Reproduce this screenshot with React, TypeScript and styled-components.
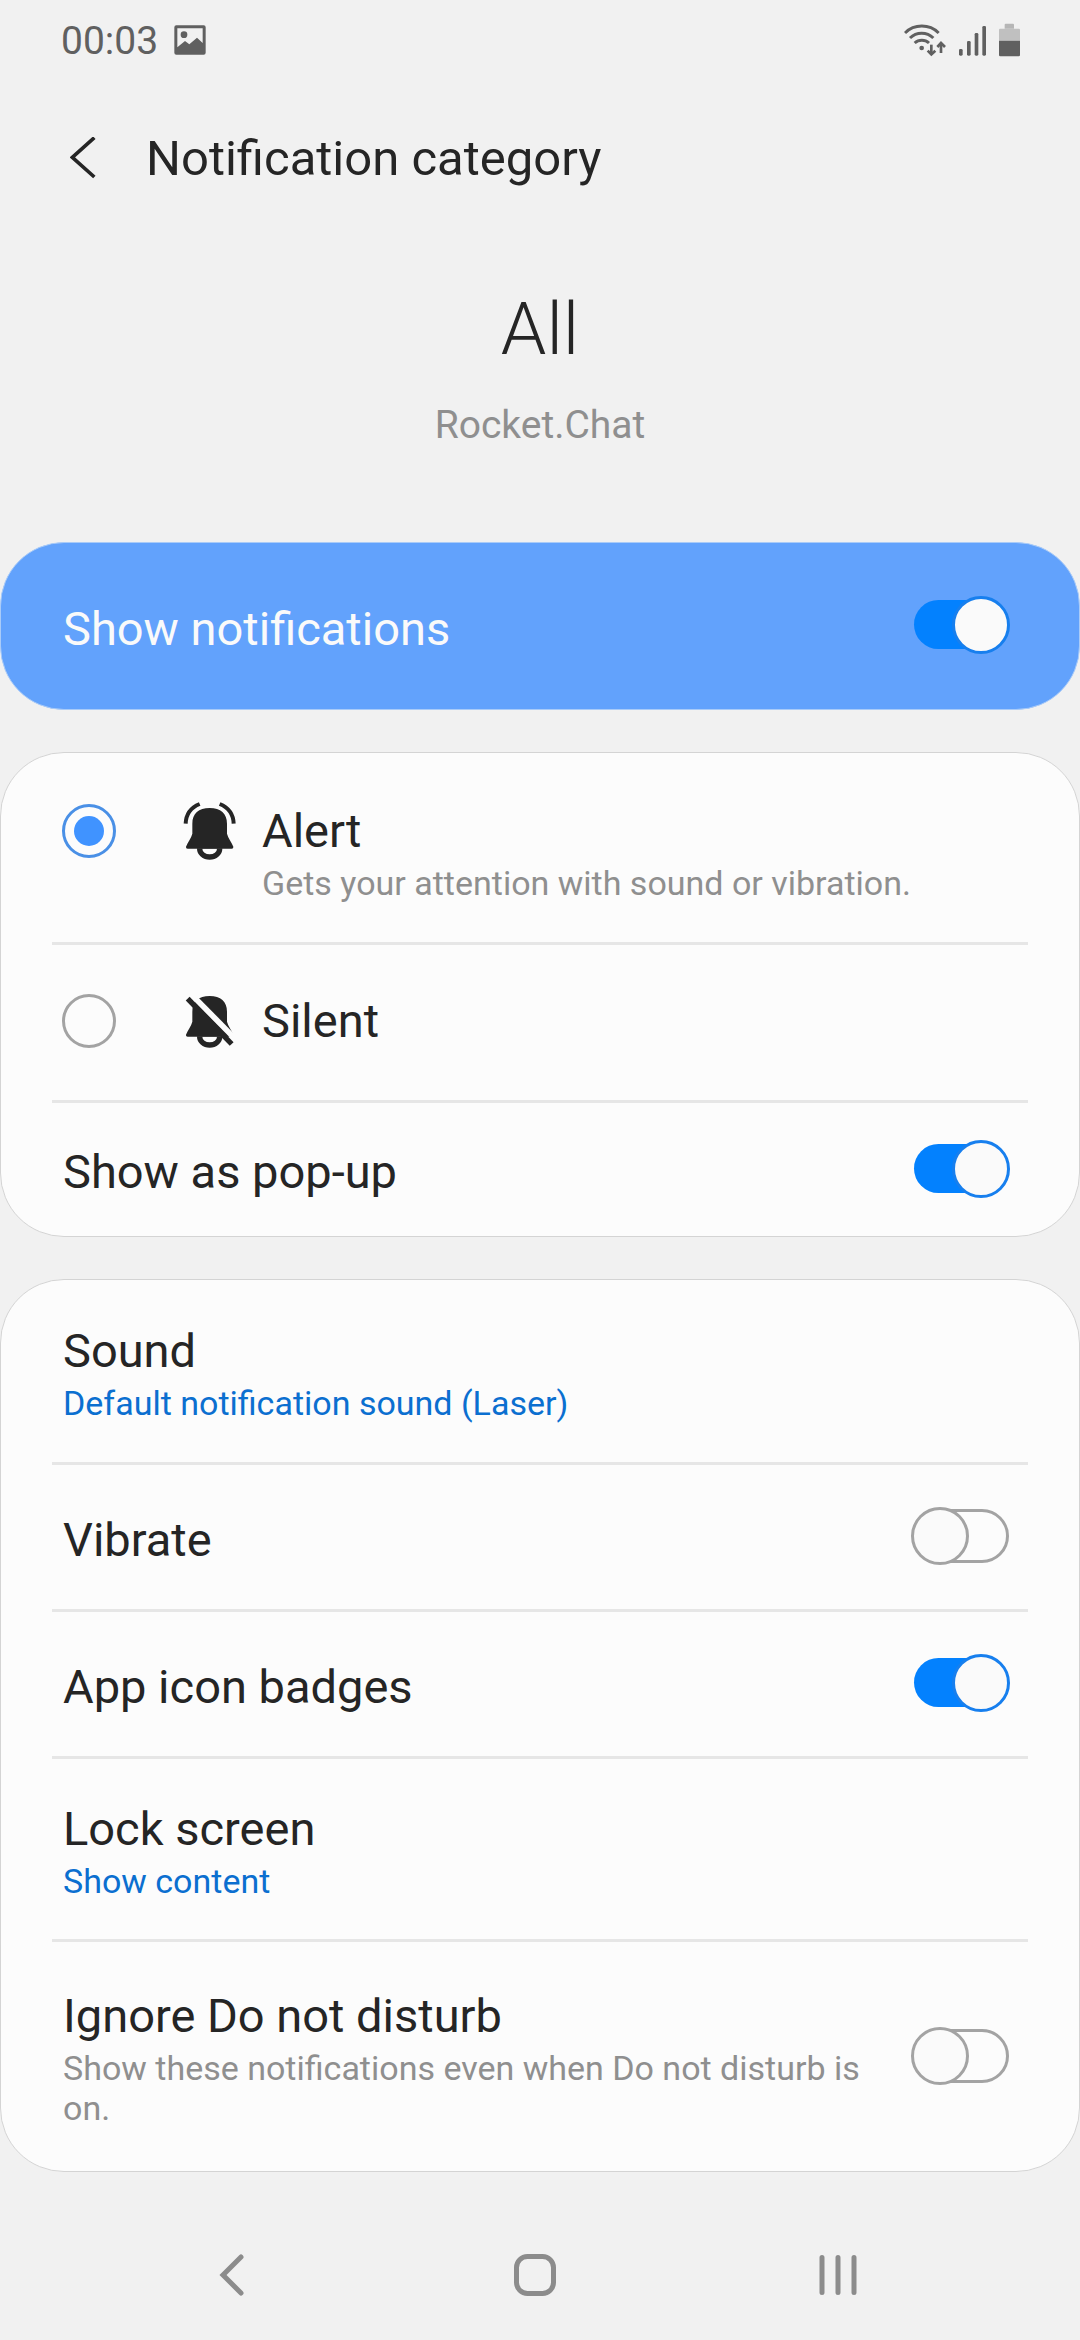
import React, { useState } from "react";
import styled, { createGlobalStyle } from "styled-components";

const ink = "#252525";
const muted = "#8f8f8f";
const blue = "#0381fe";
const link = "#0b6fd0";

const GlobalStyle = createGlobalStyle`
  *, *::before, *::after { box-sizing: border-box; }
  body {
    margin: 0;
    background: #f1f1f1;
    color: ${ink};
    font-family: Roboto, "Noto Sans", sans-serif;
  }
  button { border: 0; padding: 0; background: none; font: inherit; color: inherit; cursor: pointer; }
`;

const Screen = styled.div`
  display: flex;
  flex-direction: column;
  min-height: 100vh;
`;

const StatusBar = styled.div`
  display: flex;
  align-items: center;
  justify-content: space-between;
  height: 80px;
  padding: 0 60px 0 61px;
  color: #606060;
`;

const StatusGroup = styled.div<{ $gap: number }>`
  display: flex;
  align-items: center;
  gap: ${(p) => p.$gap}px;
`;

const Clock = styled.span`
  font-size: 39px;
  line-height: 46px;
  padding-top: 2px;
`;

const Header = styled.header`
  display: flex;
  align-items: center;
  height: 158px;
  padding: 0 60px;
`;

const BackButton = styled.button`
  display: flex;
  align-items: center;
  width: 86px;
  height: 86px;
  padding-left: 10px;
`;

const HeaderTitle = styled.h1`
  margin: 0;
  font-size: 49px;
  font-weight: 400;
  line-height: 64px;
`;

const Hero = styled.section`
  display: flex;
  flex-direction: column;
  align-items: center;
  gap: 30px;
  padding: 48px 60px 94px;
`;

const ChannelName = styled.h2`
  margin: 0;
  font-size: 73px;
  font-weight: 300;
  line-height: 86px;
`;

const AppName = styled.p`
  margin: 0;
  color: ${muted};
  font-size: 39px;
  line-height: 46px;
`;

const Groups = styled.main`
  display: flex;
  flex: 1;
  flex-direction: column;
  gap: 42px;
`;

const Card = styled.section<{ $accent?: boolean }>`
  overflow: hidden;
  border: 1px solid ${(p) => (p.$accent ? "#a9cbf8" : "#d4d4d4")};
  border-radius: 64px;
  background: ${(p) => (p.$accent ? "#62a2fc" : "#fcfcfc")};
  color: ${(p) => (p.$accent ? "#fafafa" : ink)};
`;

const Divider = styled.hr`
  height: 3px;
  margin: 0 51px;
  border: 0;
  background: #e6e6e6;
`;

const Row = styled.div<{ $height: number }>`
  display: flex;
  align-items: center;
  justify-content: space-between;
  min-height: ${(p) => p.$height}px;
  padding: 0 69px 2px 62px;
`;

const LinkRow = styled.button<{ $height: number }>`
  display: flex;
  align-items: center;
  width: 100%;
  min-height: ${(p) => p.$height}px;
  padding: 0 62px;
  text-align: left;
`;

const OptionRow = styled.label<{ $height: number; $top: number }>`
  display: flex;
  align-items: flex-start;
  min-height: ${(p) => p.$height}px;
  padding: ${(p) => p.$top}px 62px 0 61px;
`;

const OptionIcon = styled.span`
  display: flex;
  align-items: flex-start;
  width: 80px;
  height: 64px;
  margin-left: 66px;
`;

const Texts = styled.span<{ $single?: boolean }>`
  display: flex;
  flex: 1;
  flex-direction: column;
  padding-top: ${(p) => (p.$single ? 7 : 0)}px;
`;

const Title = styled.span`
  font-size: 47px;
  line-height: 64px;
`;

const Summary = styled.span<{ $link?: boolean }>`
  color: ${(p) => (p.$link ? link : muted)};
  font-size: 34px;
  line-height: 40px;
`;

const Radio = styled.input`
  display: grid;
  place-items: center;
  flex: none;
  appearance: none;
  width: 54px;
  height: 54px;
  margin: 5px 0;
  border: 3px solid #a3a3a3;
  border-radius: 50%;

  &:checked { border-color: #4a90e6; }
  &:checked::before {
    content: "";
    width: 30px;
    height: 30px;
    border-radius: 50%;
    background: #4093ff;
  }
`;

const Switch = styled.input`
  position: relative;
  flex: none;
  appearance: none;
  width: 99px;
  height: 58px;
  margin: 0;
  cursor: pointer;

  &::before {
    content: "";
    position: absolute;
    inset: 2px 1px 2px 8px;
    border: 3px solid #a3a3a3;
    border-radius: 27px;
  }
  &::after {
    content: "";
    position: absolute;
    top: 0;
    left: 0;
    width: 58px;
    height: 58px;
    border: 3px solid #a3a3a3;
    border-radius: 50%;
    background: #fafafa;
  }
  &:checked::before {
    inset: 4px 8px 5px 3px;
    border: 0;
    background: ${blue};
  }
  &:checked::after {
    left: 41px;
    border-color: #177fee;
  }
`;

const NavBar = styled.nav`
  display: grid;
  grid-template-columns: repeat(3, 1fr);
  height: 130px;
  padding: 0 90px 0 80px;
`;

const NavButton = styled.button`
  display: flex;
  align-items: center;
  justify-content: center;
`;

const PictureIcon = () => (
  <svg width="32" height="30" viewBox="0 0 96 90" aria-hidden="true">
    <path
      fill="#606060"
      fillRule="evenodd"
      d="M7 1H89Q95 1 95 7V83Q95 89 89 89H7Q1 89 1 83V7Q1 1 7 1ZM10 10V67L33 48L46 58L69 38L86 54V10Z"
    />
    <circle cx="30" cy="29" r="10" fill="#606060" />
  </svg>
);

const WifiIcon = () => (
  <svg width="43" height="34" viewBox="0 0 129 102" fill="none" stroke="#606060" aria-hidden="true">
    <g strokeWidth="9">
      <path d="M3 30A72 72 0 0 1 104 30" />
      <path d="M18 45A50 50 0 0 1 88 45" />
      <path d="M32 60A32 32 0 0 1 75 60" />
    </g>
    <circle cx="53" cy="75" r="7" fill="#606060" stroke="none" />
    <g strokeWidth="8">
      <path d="M82 65V94" />
      <path d="M71 83L82 94L94 83" />
      <path d="M111 90V60" />
      <path d="M100 72L111 60L123 72" />
    </g>
  </svg>
);

const SignalIcon = () => (
  <svg width="28" height="34" viewBox="0 0 84 102" fill="#606060" aria-hidden="true">
    <rect x="0" y="78" width="11" height="20" rx="4" />
    <rect x="24" y="54" width="11" height="44" rx="4" />
    <rect x="47" y="30" width="11" height="68" rx="4" />
    <rect x="70" y="9" width="11" height="89" rx="4" />
  </svg>
);

const BatteryIcon = () => (
  <svg width="21" height="34" viewBox="0 0 63 102" aria-hidden="true">
    <path fill="#b6b6b6" d="M17 17V5Q17 2 20 2H42Q45 2 45 5V17Z" />
    <path fill="#c0c0c0" d="M0 53V20Q0 17 3 17H60Q63 17 63 20V53Z" />
    <path fill="#606060" d="M0 53H63V96Q63 100 59 100H4Q0 100 0 96Z" />
  </svg>
);

const BackIcon = () => (
  <svg width="26" height="44" viewBox="0 0 78 132" fill="none" aria-hidden="true">
    <path d="M73 2L7 61L73 120" stroke={ink} strokeWidth="11" />
  </svg>
);

const bellBody =
  "M31 68C31 38 50 21 83 21C116 21 135 38 135 68V98C138 110 149 125 154 137Q155 143 149 143H17Q11 143 12 137C17 125 28 110 31 98Z";
const bellClapper =
  "M45 142H121V143A38 33 0 0 1 45 143ZM61 143A22 17 0 0 0 105 143Z";

const BellRingIcon = () => (
  <svg width="56" height="62" viewBox="0 -6 168 186" fill={ink} aria-hidden="true">
    <path d={bellBody} />
    <path d={bellClapper} fillRule="evenodd" />
    <g fill="none" stroke={ink} strokeWidth="12">
      <path d="M53 9C28 19 12 40 11 68" />
      <path d="M113 9C138 19 154 40 155 68" />
    </g>
  </svg>
);

const BellOffIcon = () => (
  <svg width="56" height="60" viewBox="0 0 168 180" fill={ink} aria-hidden="true">
    <path d={bellBody} />
    <path d={bellClapper} fillRule="evenodd" />
    <path d="M20 8L164 154" stroke="#fcfcfc" strokeWidth="17" />
    <path d="M17 29L149 165" stroke={ink} strokeWidth="16" />
  </svg>
);

type ToggleProps = {
  id: string;
  title: string;
  summary?: string;
  on: boolean;
  height: number;
};

function ToggleRow({ id, title, summary, on, height }: ToggleProps) {
  const [checked, setChecked] = useState(on);
  return (
    <Row $height={height}>
      <Texts as="label" htmlFor={id} $single={!summary}>
        <Title>{title}</Title>
        {summary && <Summary>{summary}</Summary>}
      </Texts>
      <Switch id={id} type="checkbox" role="switch" checked={checked} onChange={() => setChecked(!checked)} />
    </Row>
  );
}

function ChoiceRow({ title, summary, height }: { title: string; summary: string; height: number }) {
  return (
    <LinkRow type="button" $height={height}>
      <Texts>
        <Title>{title}</Title>
        <Summary $link>{summary}</Summary>
      </Texts>
    </LinkRow>
  );
}

export default function App() {
  const [mode, setMode] = useState("alert");
  return (
    <Screen>
      <GlobalStyle />
      <StatusBar>
        <StatusGroup $gap={16}>
          <Clock>00:03</Clock>
          <PictureIcon />
        </StatusGroup>
        <StatusGroup $gap={12}>
          <WifiIcon />
          <SignalIcon />
          <BatteryIcon />
        </StatusGroup>
      </StatusBar>

      <Header>
        <BackButton type="button" aria-label="Navigate up">
          <BackIcon />
        </BackButton>
        <HeaderTitle>Notification category</HeaderTitle>
      </Header>

      <Hero>
        <ChannelName>All</ChannelName>
        <AppName>Rocket.Chat</AppName>
      </Hero>

      <Groups>
        <Card $accent>
          <ToggleRow id="show" title="Show notifications" on height={166} />
        </Card>

        <Card>
          <OptionRow $height={189} $top={46}>
            <Radio type="radio" name="mode" checked={mode === "alert"} onChange={() => setMode("alert")} />
            <OptionIcon>
              <BellRingIcon />
            </OptionIcon>
            <Texts>
              <Title>Alert</Title>
              <Summary>Gets your attention with sound or vibration.</Summary>
            </Texts>
          </OptionRow>
          <Divider />
          <OptionRow $height={155} $top={44}>
            <Radio type="radio" name="mode" checked={mode === "silent"} onChange={() => setMode("silent")} />
            <OptionIcon>
              <BellOffIcon />
            </OptionIcon>
            <Texts>
              <Title>Silent</Title>
            </Texts>
          </OptionRow>
          <Divider />
          <ToggleRow id="popup" title="Show as pop-up" on height={133} />
        </Card>

        <Card>
          <ChoiceRow title="Sound" summary="Default notification sound (Laser)" height={182} />
          <Divider />
          <ToggleRow id="vibrate" title="Vibrate" on={false} height={144} />
          <Divider />
          <ToggleRow id="badges" title="App icon badges" on height={144} />
          <Divider />
          <ChoiceRow title="Lock screen" summary="Show content" height={180} />
          <Divider />
          <ToggleRow
            id="dnd"
            title="Ignore Do not disturb"
            summary="Show these notifications even when Do not disturb is on."
            on={false}
            height={229}
          />
        </Card>
      </Groups>

      <NavBar>
        <NavButton type="button" aria-label="Back">
          <svg width="26" height="42" viewBox="0 0 26 42" fill="none" aria-hidden="true">
            <path d="M22 3L4 21L22 39" stroke="#8c8c8c" strokeWidth="5" strokeLinecap="round" />
          </svg>
        </NavButton>
        <NavButton type="button" aria-label="Home">
          <svg width="42" height="42" viewBox="0 0 42 42" fill="none" aria-hidden="true">
            <rect x="2.5" y="2.5" width="37" height="37" rx="11" stroke="#8c8c8c" strokeWidth="5" />
          </svg>
        </NavButton>
        <NavButton type="button" aria-label="Recent apps">
          <svg width="38" height="42" viewBox="0 0 38 42" fill="none" aria-hidden="true">
            <path d="M3 3.500V38.500M19 3.500V38.500M35 3.500V38.500" stroke="#8c8c8c" strokeWidth="5" strokeLinecap="round" />
          </svg>
        </NavButton>
      </NavBar>
    </Screen>
  );
}
